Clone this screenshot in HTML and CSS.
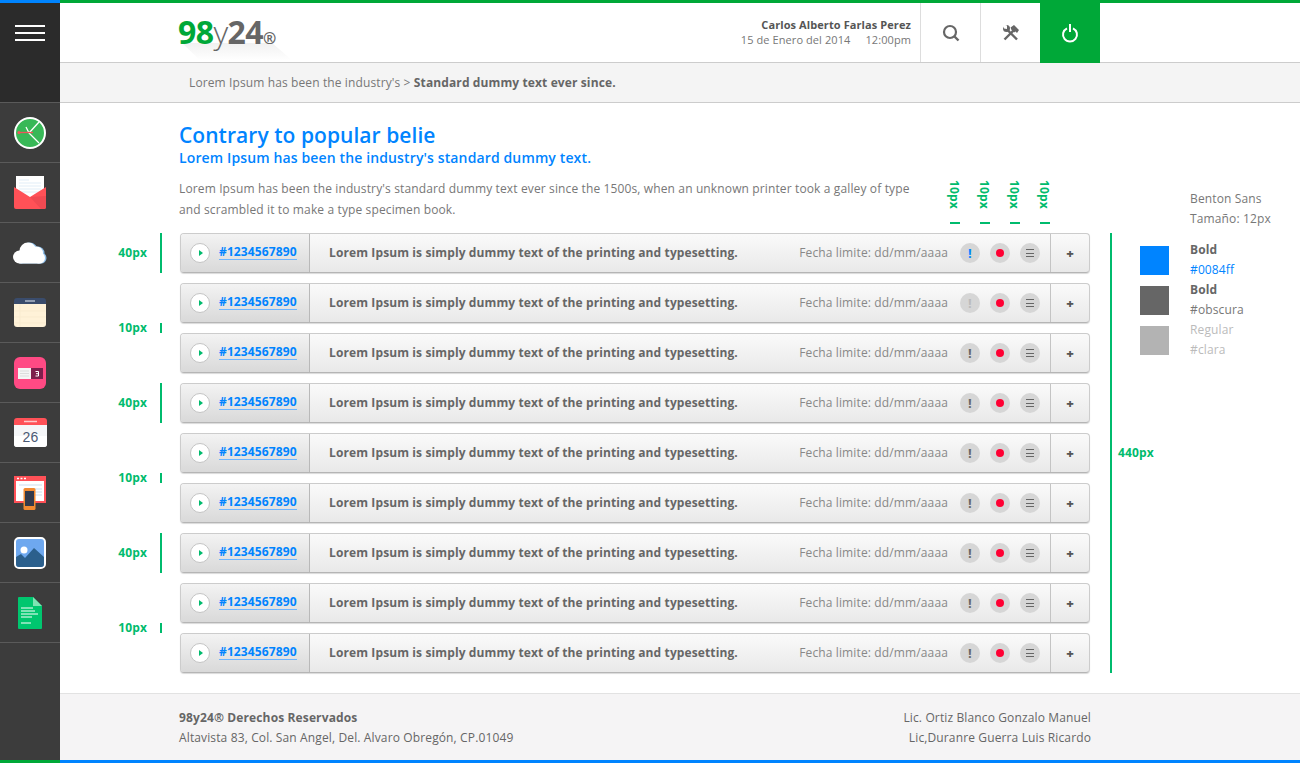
FILE: index.html
```html
<!DOCTYPE html>
<html lang="es">
<head>
<meta charset="utf-8">
<title>98y24</title>
<link rel="stylesheet" href="styles.css">
</head>
<body>
<div class="app">
  <aside class="sidebar">
    <div class="burger"><span></span><span></span><span></span></div>
    <ul class="apps">
      <li><svg width="32" height="32" viewBox="0 0 32 32"><circle cx="16" cy="16" r="15" fill="#38b857" stroke="#fff" stroke-width="2"/><path d="M15 16L25 5M15 16L25 26M15 16L12 10" stroke="#fff" stroke-width="1.3" fill="none"/><path d="M5 15.500H19" stroke="#f2545b" stroke-width="1.300"/><circle cx="5" cy="15.500" r="1.600" fill="#f2545b"/></svg></li>
      <li><svg width="32" height="33" viewBox="0 0 32 33"><path d="M2 0H30V22H2z" fill="#fff"/><path d="M5 4H15M5 7H27M5 10H27M5 13H27M5 16H27" stroke="#e2eef8" stroke-width="1.200"/><path d="M0 11L16 21L32 11V31a2 2 0 0 1-2 2H2a2 2 0 0 1-2-2z" fill="#ff5157"/><path d="M32 20V31a2 2 0 0 1-2 2H27L16 21z" fill="#f04a52"/></svg></li>
      <li><svg width="34" height="22" viewBox="0 0 34 22"><g fill="#8fbfe9"><circle cx="8" cy="15" r="6.500"/><circle cx="16.500" cy="9" r="8.500"/><circle cx="25" cy="11" r="6.500"/><circle cx="28" cy="16" r="5.500"/><rect x="8" y="14" width="20" height="7.500"/></g><g fill="#fff"><circle cx="6.500" cy="15" r="6.500"/><circle cx="15" cy="9" r="8.500"/><circle cx="23.500" cy="11" r="6.500"/><circle cx="26.500" cy="16" r="5.500"/><rect x="6.500" y="14" width="20" height="7.500"/></g></svg></li>
      <li><svg width="32" height="29" viewBox="0 0 32 29"><path d="M0 3a3 3 0 0 1 3-3H29a3 3 0 0 1 3 3V6H0z" fill="#3a4c6c"/><path d="M0 6H32V26a3 3 0 0 1-3 3H3a3 3 0 0 1-3-3z" fill="#fff2d8"/><path d="M0 13H32M0 19H32M0 25H32M6 6V29" stroke="#f9ebcf" stroke-width="1"/><path d="M11 3H21" stroke="#aeb8ca" stroke-width="1.500"/></svg></li>
      <li><svg width="32" height="32" viewBox="0 0 32 32"><rect width="32" height="32" rx="6" fill="#ff4a84"/><rect x="4" y="11" width="13" height="11" fill="#f4f4f4"/><path d="M6 14H15M6 16.500H15M6 19H15" stroke="#dcdcdc"/><rect x="17" y="11" width="12" height="11" fill="#7d1f4c"/><path d="M21.500 14.500H24.500V19H21.500M22 16.700H24.500" stroke="#fff" fill="none"/></svg></li>
      <li><svg width="33" height="29" viewBox="0 0 33 29"><path d="M0 7H33V26a3 3 0 0 1-3 3H3a3 3 0 0 1-3-3z" fill="#f5f6f8"/><path d="M0 18H33V26a3 3 0 0 1-3 3H3a3 3 0 0 1-3-3z" fill="#fff"/><path d="M0 3a3 3 0 0 1 3-3H30a3 3 0 0 1 3 3V7H0z" fill="#ff5157"/><path d="M10 3.500H23" stroke="#ffc9cb" stroke-width="1.500"/><text x="16.500" y="24" text-anchor="middle" class="cal">26</text></svg></li>
      <li><svg width="32" height="34" viewBox="0 0 32 34"><rect width="32" height="27" fill="#ff5157"/><rect x="2" y="5" width="28" height="20" fill="#fff"/><path d="M3 2.500H5M6.500 2.500H8.500M10 2.500H12" stroke="#fff" stroke-width="1.500"/><path d="M5 9H28M20 13H28M20 16H28M20 19H28" stroke="#dde9f4" stroke-width="1.500"/><rect x="9.500" y="12" width="12" height="22" rx="1.500" fill="#f28a30"/><rect x="11" y="15" width="9" height="15" fill="#33394a"/></svg></li>
      <li><svg width="32" height="32" viewBox="0 0 32 32"><rect x="1" y="1" width="30" height="30" rx="4" fill="#6ea8ef" stroke="#fff" stroke-width="2"/><circle cx="10" cy="13" r="3.500" fill="#fff"/><path d="M2 20L7 17L11 21L20 11L30 20V27a3 3 0 0 1-3 3H5a3 3 0 0 1-3-3z" fill="#2b5f8c"/></svg></li>
      <li><svg width="24" height="32" viewBox="0 0 24 32"><path d="M0 1a1 1 0 0 1 1-1H15L24 9V31a1 1 0 0 1-1 1H1a1 1 0 0 1-1-1z" fill="#00c66f"/><path d="M15 0L24 9H15z" fill="#7ee3b4"/><path d="M3 11H15M3 14H17M3 17H20M3 20H14M3 26H13" stroke="#fff" stroke-width="1"/></svg></li>
    </ul>
  </aside>
  <div class="main">
    <header class="topbar">
      <div class="logo"><b class="logo-green">98</b><span class="logo-y">y</span><b class="logo-gray">24</b><b class="logo-r">®</b></div>
      <div class="user">
        <strong>Carlos Alberto Farlas Perez</strong>
        <span>15 de Enero del 2014 <i>12:00pm</i></span>
      </div>
      <button class="tool"><svg width="18" height="18" viewBox="0 0 18 18"><circle cx="8" cy="8" r="6" fill="none" stroke="#666" stroke-width="2.200"/><path d="M12.500 12.500L16.500 16.500" stroke="#666" stroke-width="2.400"/></svg></button>
      <button class="tool"><svg width="18" height="18" viewBox="0 0 18 18"><path d="M2.500 15.500L12 6" stroke="#666" stroke-width="2.400"/><path d="M8.500 3.500L12 1L17 6L15 9L13.500 7.500L12 8.500L9.500 6z" fill="#666"/><path d="M15 15.500L5 5.500" stroke="#666" stroke-width="2.400"/><circle cx="4.500" cy="4.500" r="3.500" fill="#666"/><path d="M0 0L5 1.500L5 5L2 4.500z" fill="#fff"/></svg></button>
      <button class="tool power"><svg width="18" height="20" viewBox="0 0 18 20"><path d="M6 5.300a7 7 0 1 0 6 0" fill="none" stroke="#fff" stroke-width="2"/><path d="M9 1V9" stroke="#fff" stroke-width="2"/></svg></button>
    </header>
    <nav class="crumbs">Lorem Ipsum has been the industry's &gt; <strong>Standard dummy text ever since.</strong></nav>
    <main class="content">
      <div class="intro">
        <h1>Contrary to popular belie</h1>
        <h2>Lorem Ipsum has been the industry's standard dummy text.</h2>
        <p>Lorem Ipsum has been the industry's standard dummy text ever since the 1500s, when an unknown printer took a galley of type and scrambled it to make a type specimen book.</p>
      </div>
      <div class="vmarks">
        <div class="vmark"><span>10px</span><i></i></div>
        <div class="vmark"><span>10px</span><i></i></div>
        <div class="vmark"><span>10px</span><i></i></div>
        <div class="vmark"><span>10px</span><i></i></div>
      </div>
      <div class="gutter">
        <div class="group"><div class="mark tall"><span>40px</span><i></i></div><div class="mark short"><span>10px</span><i></i></div></div>
        <div class="group"><div class="mark tall"><span>40px</span><i></i></div><div class="mark short"><span>10px</span><i></i></div></div>
        <div class="group"><div class="mark tall"><span>40px</span><i></i></div><div class="mark short"><span>10px</span><i></i></div></div>
      </div>
      <div class="rows">
        <div class="row"><div class="id"><span class="play"></span><a>#1234567890</a></div><div class="desc"><strong>Lorem Ipsum is simply dummy text of the printing and typesetting.</strong><span class="date">Fecha limite: dd/mm/aaaa</span><span class="dot alert on">!</span><span class="dot rec"></span><span class="dot menu"></span></div><div class="plus">+</div></div>
        <div class="row"><div class="id"><span class="play"></span><a>#1234567890</a></div><div class="desc"><strong>Lorem Ipsum is simply dummy text of the printing and typesetting.</strong><span class="date">Fecha limite: dd/mm/aaaa</span><span class="dot alert off">!</span><span class="dot rec"></span><span class="dot menu"></span></div><div class="plus">+</div></div>
        <div class="row"><div class="id"><span class="play"></span><a>#1234567890</a></div><div class="desc"><strong>Lorem Ipsum is simply dummy text of the printing and typesetting.</strong><span class="date">Fecha limite: dd/mm/aaaa</span><span class="dot alert">!</span><span class="dot rec"></span><span class="dot menu"></span></div><div class="plus">+</div></div>
        <div class="row"><div class="id"><span class="play"></span><a>#1234567890</a></div><div class="desc"><strong>Lorem Ipsum is simply dummy text of the printing and typesetting.</strong><span class="date">Fecha limite: dd/mm/aaaa</span><span class="dot alert">!</span><span class="dot rec"></span><span class="dot menu"></span></div><div class="plus">+</div></div>
        <div class="row"><div class="id"><span class="play"></span><a>#1234567890</a></div><div class="desc"><strong>Lorem Ipsum is simply dummy text of the printing and typesetting.</strong><span class="date">Fecha limite: dd/mm/aaaa</span><span class="dot alert">!</span><span class="dot rec"></span><span class="dot menu"></span></div><div class="plus">+</div></div>
        <div class="row"><div class="id"><span class="play"></span><a>#1234567890</a></div><div class="desc"><strong>Lorem Ipsum is simply dummy text of the printing and typesetting.</strong><span class="date">Fecha limite: dd/mm/aaaa</span><span class="dot alert">!</span><span class="dot rec"></span><span class="dot menu"></span></div><div class="plus">+</div></div>
        <div class="row"><div class="id"><span class="play"></span><a>#1234567890</a></div><div class="desc"><strong>Lorem Ipsum is simply dummy text of the printing and typesetting.</strong><span class="date">Fecha limite: dd/mm/aaaa</span><span class="dot alert">!</span><span class="dot rec"></span><span class="dot menu"></span></div><div class="plus">+</div></div>
        <div class="row"><div class="id"><span class="play"></span><a>#1234567890</a></div><div class="desc"><strong>Lorem Ipsum is simply dummy text of the printing and typesetting.</strong><span class="date">Fecha limite: dd/mm/aaaa</span><span class="dot alert">!</span><span class="dot rec"></span><span class="dot menu"></span></div><div class="plus">+</div></div>
        <div class="row"><div class="id"><span class="play"></span><a>#1234567890</a></div><div class="desc"><strong>Lorem Ipsum is simply dummy text of the printing and typesetting.</strong><span class="date">Fecha limite: dd/mm/aaaa</span><span class="dot alert">!</span><span class="dot rec"></span><span class="dot menu"></span></div><div class="plus">+</div></div>
      </div>
      <div class="height-mark"><span>440px</span></div>
      <div class="legend">
        <div class="font-note">Benton Sans<br>Tamaño: 12px</div>
        <div class="swatch-row"><span class="swatch blue"></span><div><b>Bold</b><br><em class="c-blue">#0084ff</em></div></div>
        <div class="swatch-row"><span class="swatch dark"></span><div><b>Bold</b><br><em>#obscura</em></div></div>
        <div class="swatch-row light"><span class="swatch pale"></span><div>Regular<br>#clara</div></div>
      </div>
    </main>
    <footer class="footer">
      <div><strong>98y24® Derechos Reservados</strong><br>Altavista 83, Col. San Angel, Del. Alvaro Obregón, CP.01049</div>
      <div class="credits">Lic. Ortiz Blanco Gonzalo Manuel<br>Lic,Duranre Guerra Luis Ricardo</div>
    </footer>
  </div>
</div>
</body>
</html>
```
FILE: styles.css
```css
* { box-sizing: border-box; }
html, body { margin: 0; height: 100%; }
body { font-family: "Open Sans", sans-serif; font-size: 12px; letter-spacing: .13px; color: #666; background: #fff; overflow: hidden; }
.app { display: flex; height: 763px; }

/* Sidebar */
.sidebar { width: 60px; flex: none; background: #3c3c3c; border-top: 3px solid #0084ff; border-bottom: 3px solid #00a838; }
.burger { height: 99px; background: #2b2b2b; padding-top: 22px; display: flex; flex-direction: column; align-items: center; gap: 5px; }
.burger span { width: 30px; height: 2px; background: #fff; }
.apps { list-style: none; margin: 0; padding: 0; }
.apps li { height: 60px; border-top: 1px solid #5a5a5a; display: flex; align-items: center; justify-content: center; }
.apps li:last-child { height: 61px; border-bottom: 1px solid #5a5a5a; }
.cal { font: 14px "Liberation Sans", sans-serif; fill: #4a5873; }

/* Main column */
.main { flex: 1; min-width: 0; display: flex; flex-direction: column; border-top: 3px solid #00a838; border-bottom: 3px solid #0084ff; }
.topbar { height: 60px; flex: none; display: flex; align-items: stretch; border-bottom: 1px solid #ccc; padding-right: 200px; }
.logo { position: relative; margin-left: 118px; margin-right: auto; font-size: 32px; line-height: 58px; letter-spacing: -0.600px; white-space: nowrap; }
.logo::after { content: ""; position: absolute; left: 4px; top: 40px; width: 118px; height: 19px; background: linear-gradient(#f1f1f1, #fff 90%); clip-path: polygon(0 0, 90px 0, 112px 19px, 20px 19px); z-index: -1; }
.logo-green { color: #00a838; font-weight: 700; }
.logo-y { color: #666; font-weight: 300; }
.logo-gray { color: #666; font-weight: 700; }
.logo-r { color: #666; font-size: 16px; font-weight: 700; }
.user { display: flex; flex-direction: column; align-items: flex-end; justify-content: center; padding: 0 9px 1px 0; font-size: 11px; letter-spacing: .09px; line-height: 15px; color: #777; }
.user strong { color: #555; font-weight: 700; }
.user i { font-style: normal; margin-left: 12px; }
.tool { width: 60px; border: 0; border-left: 1px solid #ddd; background: #fff; padding: 0; display: flex; align-items: center; justify-content: center; }
.tool.power { background: #00a838; border-left: 0; margin-bottom: -1px; }
.crumbs { height: 40px; flex: none; background: #f4f4f4; border-bottom: 1px solid #ccc; padding: 0 0 0 129px; display: flex; align-items: center; white-space: pre; font-size: 12px; letter-spacing: .115px; color: #777; }
.crumbs strong { color: #666; font-weight: 700; }

/* Content */
.content { flex: 1; min-height: 0; display: grid; grid-template-columns: 120px 910px 1fr; grid-template-rows: 130px 440px; position: relative; }
.intro { grid-column: 2; grid-row: 1; padding-top: 19px; margin-left: -1px; width: 735px; }
h1 { margin: 0 0 1px; font-size: 21px; letter-spacing: .05px; line-height: 26px; font-weight: 600; color: #0084ff; }
h2 { margin: 0; font-size: 14px; line-height: 18px; font-weight: 600; color: #0084ff; }
.intro p { margin: 11px 0 0; font-size: 12px; line-height: 21px; color: #777; }
.vmarks { grid-column: 2; grid-row: 1; justify-self: end; align-self: end; display: flex; gap: 20px; margin-right: 40px; margin-bottom: 9px; }
.vmark { width: 10px; display: flex; flex-direction: column; align-items: center; gap: 13px; }
.vmark span { writing-mode: vertical-rl; font-size: 12px; line-height: 10px; font-weight: 700; color: #00bb6d; margin-left: -2px; }
.vmark i { width: 10px; height: 2px; background: #00bb6d; }

.gutter { grid-column: 1; grid-row: 2; display: flex; flex-direction: column; }
.group { height: 150px; flex: none; padding-right: 18px; }
.mark { display: flex; justify-content: flex-end; align-items: center; gap: 13px; font-size: 12px; font-weight: 700; color: #00bb6d; }
.mark span { margin-bottom: 2px; }
.mark i { width: 2px; background: #00bb6d; }
.mark.tall { height: 40px; }
.mark.tall i { height: 40px; }
.mark.short { height: 10px; margin-top: 50px; }
.mark.short i { height: 10px; }

.rows { grid-column: 2; grid-row: 2; display: flex; flex-direction: column; gap: 10px; }
.row { height: 40px; display: flex; border: 1px solid #ccc; border-bottom-color: #b5b5b5; border-radius: 4px; background: linear-gradient(#fafafa, #e9e9e9); box-shadow: 0 1px 1px rgba(0,0,0,.15); }
.id { width: 129px; flex: none; display: flex; align-items: center; gap: 9px; padding-left: 9px; border-right: 1px solid #b9b9b9; background: linear-gradient(#f3f3f3, #d9d9d9); border-radius: 3px 0 0 3px; }
.play { width: 20px; height: 20px; border-radius: 50%; background: #fff; border: 1px solid #c4c4c4; position: relative; flex: none; }
.play::after { content: ""; position: absolute; left: 8px; top: 6px; border-left: 4px solid #00bb6d; border-top: 3px solid transparent; border-bottom: 3px solid transparent; }
.id a { font-weight: 700; font-size: 12px; line-height: 15px; color: #0084ff; border-bottom: 1px solid #6db5ff; margin-bottom: 2px; }
.desc { flex: 1; min-width: 0; display: flex; align-items: center; padding-left: 19px; }
.desc strong { font-size: 12px; letter-spacing: .115px; font-weight: 700; color: #666; white-space: nowrap; margin-right: auto; margin-bottom: 2px; }
.date { font-size: 12px; letter-spacing: .13px; color: #888; margin-right: 12px; margin-bottom: 2px; white-space: nowrap; }
.dot { width: 20px; height: 20px; border-radius: 50%; background: #d6d6d6; display: flex; align-items: center; justify-content: center; flex: none; margin-right: 10px; font-size: 13px; font-weight: 700; }
.dot.alert { color: #666; }
.dot.alert.on { color: #0084ff; }
.dot.alert.off { color: #bbb; }
.dot.rec::after { content: ""; width: 8px; height: 8px; border-radius: 50%; background: #ff0033; }
.dot.menu::after { content: ""; width: 8px; height: 6px; border-top: 1px solid #666; border-bottom: 1px solid #666; background: linear-gradient(#666, #666) center / 100% 1px no-repeat; }
.plus { width: 39px; flex: none; border-left: 1px solid #c4c4c4; display: flex; align-items: center; justify-content: center; font-size: 13px; font-weight: 800; color: #555; }

.height-mark { grid-column: 3; grid-row: 2; margin-left: 20px; width: 60px; border-left: 2px solid #00bb6d; display: flex; align-items: center; padding: 0 0 2px 6px; font-size: 12px; font-weight: 700; color: #00bb6d; }
.legend { grid-column: 3; grid-row: 1 / 3; margin-left: 50px; padding-top: 86px; font-size: 12px; line-height: 20px; color: #777; }
.font-note { margin-left: 50px; margin-bottom: 11px; }
.swatch-row { display: flex; gap: 21px; height: 40px; }
.swatch-row .swatch { width: 29px; height: 29px; margin-top: 6px; flex: none; }
.swatch-row b { color: #666; font-weight: 700; }
.swatch-row em { font-style: normal; }
.swatch-row.light { color: #bbb; }
.c-blue { color: #0084ff; }
.blue { background: #0084ff; }
.dark { background: #666; }
.pale { background: #b3b3b3; }

/* Footer */
.footer { height: 67px; flex: none; background: #f5f4f5; border-top: 1px solid #e2e2e2; padding: 14px 209px 0 119px; display: flex; justify-content: space-between; font-size: 12px; line-height: 20px; color: #666; }
.footer strong { font-weight: 700; }
.credits { text-align: right; }
```
